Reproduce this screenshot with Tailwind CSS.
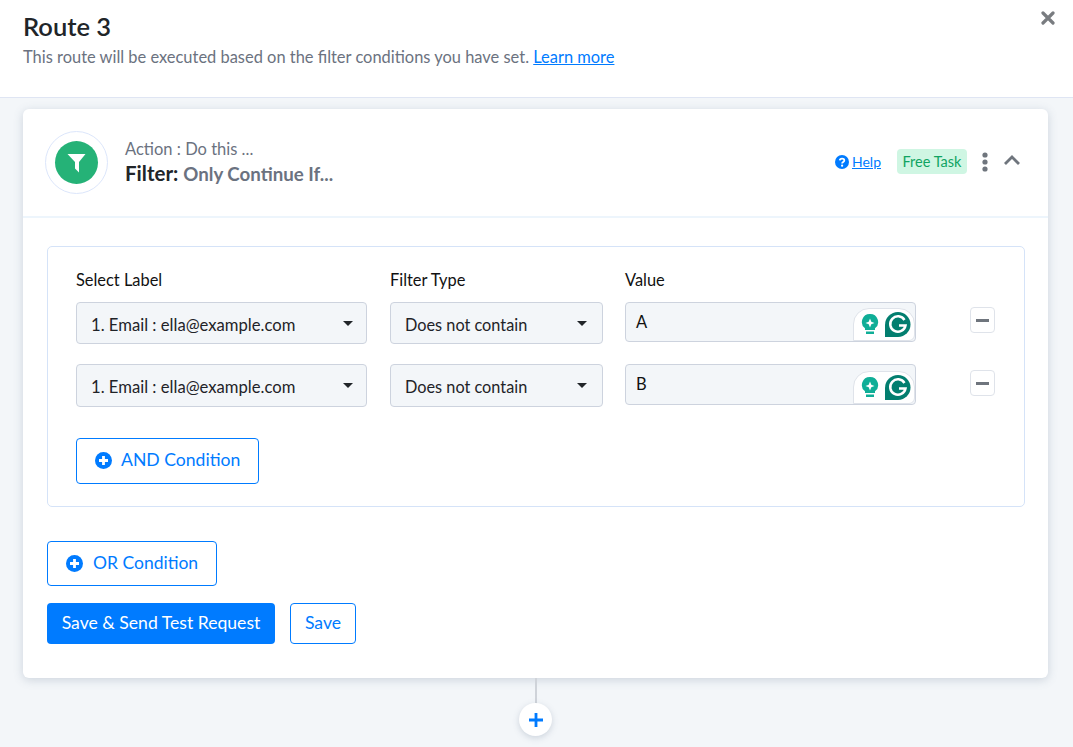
<!DOCTYPE html>
<html><head><meta charset="utf-8"><title>Route 3</title>
<script src="https://cdn.jsdelivr.net/npm/@tailwindcss/browser@4"></script></head>
<body class="m-0">
<div class="relative w-[1073px] h-[747px] overflow-hidden bg-[#f3f6f9] font-['Lato','Liberation_Sans',sans-serif] text-[#1f2328]">
  <header class="relative h-[98px] bg-white border-b border-[#dfe5f3] pl-[23px] pt-[11px]">
    <h1 class="text-[25.5px] leading-[30px] font-semibold text-[#212529]">Route 3</h1>
    <p class="mt-[5px] text-[16.45px] leading-[22px] text-[#6b7280]">This route will be executed based on the filter conditions you have set. <a href="#" class="text-[#007bff] underline">Learn more</a></p>
    <svg class="absolute left-[1041px] top-[11px]" width="14" height="14" viewBox="0 0 14 14"><path d="M2 2 12 12M12 2 2 12" stroke="#797c80" stroke-width="3.2" stroke-linecap="round"/></svg>
  </header>
  <section class="ml-[23px] mt-[11px] w-[1025px] h-[569px] bg-white rounded-[6px] shadow-[0_2px_10px_rgba(90,110,140,0.25)]">
    <div class="h-[109px] border-b-2 border-[#edf5fc] pl-[22px] pr-[27px] flex items-start">
      <div class="mt-[22px] w-[63px] h-[63px] rounded-full border border-[#dce6fb] flex items-center justify-center shrink-0">
        <div class="w-[43px] h-[43px] rounded-full bg-[#25b277] flex items-center justify-center">
          <svg width="19" height="20" viewBox="0 0 19 20"><path d="M0.500 1H18.500L12 9V19.500L8 15.500V9Z" fill="#fff"/></svg>
        </div>
      </div>
      <div class="ml-[17px] mt-[29px]">
        <div class="text-[16.5px] leading-[22px] text-[#6b7280]">Action : Do this ...</div>
        <div class="text-[20.500px] leading-[26px] font-bold text-[#212529]">Filter: <span class="text-[18.700px] text-[#6b7280]">Only Continue If...</span></div>
      </div>
      <div class="ml-auto mt-[40px] flex items-center">
        <svg width="14" height="14" viewBox="0 0 14 14"><circle cx="7" cy="7" r="7" fill="#007bff"/><path d="M4.8 5.4C4.9 3.2 9.3 3.1 9.3 5.4 9.3 7 7.1 6.900 7.100 8.400" fill="none" stroke="#fff" stroke-width="1.800"/><circle cx="7.100" cy="10.700" r="1.100" fill="#fff"/></svg>
        <a href="#" class="ml-[3px] text-[14px] text-[#007bff] underline">Help</a>
        <span class="ml-[16px] h-[25px] w-[70px] rounded-[4px] bg-[#cff6e3] text-[#10a462] text-[14.500px] leading-[25px] text-center">Free Task</span>
        <svg class="ml-[15px] mt-[1px]" width="6" height="20" viewBox="0 0 6 20"><circle cx="3" cy="3" r="2.600" fill="#6f757d"/><circle cx="3" cy="10" r="2.600" fill="#6f757d"/><circle cx="3" cy="17" r="2.600" fill="#6f757d"/></svg>
        <svg class="ml-[15px] mb-[4px]" width="18" height="12" viewBox="0 0 18 12"><path d="M2 10 9 3 16 10" fill="none" stroke="#6f757d" stroke-width="2.800"/></svg>
      </div>
    </div>
    <div class="pl-[24px] pt-[28px]">
      <div class="w-[978px] h-[261px] border border-[#d5e3f8] rounded-[5px] pl-[28px] pt-[22px]">
        <div class="flex text-[16.400px] leading-[22px] text-[#111] h-[33px]">
          <span class="w-[314px]">Select Label</span><span class="w-[235px]">Filter Type</span><span>Value</span>
        </div>
        <div class="flex items-start h-[62px]">
          <div class="w-[291px] h-[42px] mr-[23px] rounded-[4px] border border-[#cdd3de] bg-[#f3f6f9] pl-[14px] pr-[13px] pt-[4px] flex items-center justify-between text-[16.650px]"><span>1. Email : ella@example.com</span><i class="-mt-[4px] w-0 h-0 border-x-[5px] border-x-transparent border-t-[5px] border-t-[#212529]"></i></div>
          <div class="w-[213px] h-[42px] mr-[22px] rounded-[4px] border border-[#cdd3de] bg-[#f3f6f9] pl-[14px] pr-[15px] pt-[4px] flex items-center justify-between text-[16.300px]"><span>Does not contain</span><i class="-mt-[4px] w-0 h-0 border-x-[5px] border-x-transparent border-t-[5px] border-t-[#212529]"></i></div>
          <div class="relative w-[291px] h-[40px] rounded-[4px] border border-[#cdd3de] bg-[#f3f6f9] pl-[10px] flex items-center text-[16.500px] text-[#111]">A
            <div class="absolute right-0 bottom-0 w-[62px] h-[33px] rounded-t-[16px] rounded-br-[6px] bg-white border border-[#dfe3ea] flex items-center pl-[7px] gap-[6px]">
              <svg width="18" height="21" viewBox="0 0 18 21"><path d="M9 0a8 8 0 0 1 5 14.300V16H4v-1.700A8 8 0 0 1 9 0Z" fill="#0fae97"/><path d="M5 17.500h8v2.500H5Z" fill="#0fae97"/><path d="M9 4.500l1.300 3.200 3.200 1.300-3.200 1.300L9 13.500l-1.300-3.200L4.500 9l3.200-1.300Z" fill="#fff"/></svg>
              <svg width="26" height="25" viewBox="0 0 26 25"><path d="M13 0A12.500 12.500 0 0 1 13 25H0V13A13 13 0 0 1 13 0Z" fill="#027e6f"/><path d="M19.500 8A7.700 7.700 0 1 0 20.500 13.500H14" fill="none" stroke="#fff" stroke-width="2.500"/></svg>
            </div>
          </div>
          <button class="ml-[54px] mt-[5px] w-[25px] h-[26px] rounded-[4px] border border-[#dfe3ea] bg-white flex items-center justify-center"><span class="block w-[13px] h-[3px] bg-[#6f757d]"></span></button>
        </div>
        <div class="flex items-start">
          <div class="w-[291px] h-[43px] mr-[23px] rounded-[4px] border border-[#cdd3de] bg-[#f3f6f9] pl-[14px] pr-[13px] pt-[4px] flex items-center justify-between text-[16.650px]"><span>1. Email : ella@example.com</span><i class="-mt-[4px] w-0 h-0 border-x-[5px] border-x-transparent border-t-[5px] border-t-[#212529]"></i></div>
          <div class="w-[213px] h-[43px] mr-[22px] rounded-[4px] border border-[#cdd3de] bg-[#f3f6f9] pl-[14px] pr-[15px] pt-[4px] flex items-center justify-between text-[16.300px]"><span>Does not contain</span><i class="-mt-[4px] w-0 h-0 border-x-[5px] border-x-transparent border-t-[5px] border-t-[#212529]"></i></div>
          <div class="relative w-[291px] h-[41px] rounded-[4px] border border-[#cdd3de] bg-[#f3f6f9] pl-[10px] pb-[1px] flex items-center text-[16.500px] text-[#111]">B
            <div class="absolute right-0 bottom-0 w-[62px] h-[33px] rounded-t-[16px] rounded-br-[6px] bg-white border border-[#dfe3ea] flex items-center pl-[7px] gap-[6px]">
              <svg width="18" height="21" viewBox="0 0 18 21"><path d="M9 0a8 8 0 0 1 5 14.300V16H4v-1.700A8 8 0 0 1 9 0Z" fill="#0fae97"/><path d="M5 17.500h8v2.500H5Z" fill="#0fae97"/><path d="M9 4.500l1.300 3.200 3.200 1.300-3.200 1.300L9 13.500l-1.300-3.200L4.500 9l3.200-1.300Z" fill="#fff"/></svg>
              <svg width="26" height="25" viewBox="0 0 26 25"><path d="M13 0A12.500 12.500 0 0 1 13 25H0V13A13 13 0 0 1 13 0Z" fill="#027e6f"/><path d="M19.500 8A7.700 7.700 0 1 0 20.500 13.500H14" fill="none" stroke="#fff" stroke-width="2.500"/></svg>
            </div>
          </div>
          <button class="ml-[54px] mt-[6px] w-[25px] h-[26px] rounded-[4px] border border-[#dfe3ea] bg-white flex items-center justify-center"><span class="block w-[13px] h-[3px] bg-[#6f757d]"></span></button>
        </div>
        <button class="mt-[31px] w-[183px] h-[46px] rounded-[4px] border border-[#007bff] text-[#007bff] text-[17.600px] flex items-center pl-[18px] gap-[9px] bg-white pb-[2px]">
          <svg width="17" height="17" viewBox="0 0 17 17"><circle cx="8.500" cy="8.500" r="8.500" fill="#007bff"/><path d="M8.500 4v9M4 8.500h9" stroke="#fff" stroke-width="2.800"/></svg>AND Condition</button>
      </div>
      <button class="mt-[34px] w-[170px] h-[45px] rounded-[4px] border border-[#007bff] text-[#007bff] text-[17.500px] flex items-center pl-[18px] gap-[10px] bg-white">
        <svg class="-mt-[1px]" width="17" height="17" viewBox="0 0 17 17"><circle cx="8.500" cy="8.500" r="8.500" fill="#007bff"/><path d="M8.500 4v9M4 8.500h9" stroke="#fff" stroke-width="2.800"/></svg>OR Condition</button>
      <div class="mt-[17px] flex gap-[15px]">
        <button class="w-[228px] h-[41px] rounded-[4px] bg-[#007bff] text-white text-[17.600px]">Save &amp; Send Test Request</button>
        <button class="w-[66px] h-[41px] rounded-[4px] border border-[#007bff] text-[#007bff] bg-white text-[17.600px]">Save</button>
      </div>
    </div>
  </section>
  <div class="absolute left-[535px] top-[678px] w-[2px] h-[26px] bg-[#cfd3d9]"></div>
  <button class="absolute left-[519px] top-[703px] w-[33px] h-[33px] rounded-full bg-white shadow-[0_2px_6px_rgba(90,110,140,0.25)] flex items-center justify-center">
    <svg width="16" height="16" viewBox="0 0 16 16"><path d="M8 1v14M1 8h14" stroke="#007bff" stroke-width="2.800"/></svg>
  </button>
</div>
</body></html>
